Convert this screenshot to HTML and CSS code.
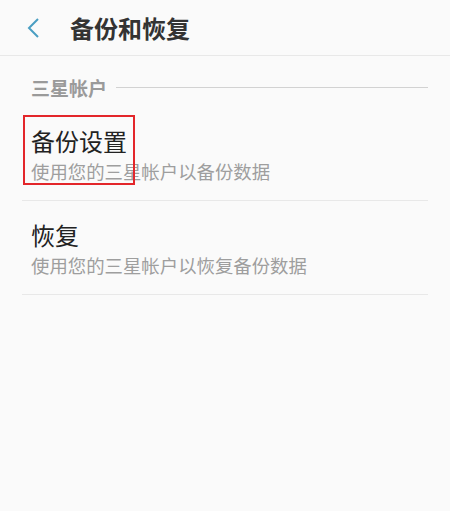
FILE: index.html
```html
<!DOCTYPE html>
<html lang="zh-CN">
<head>
<meta charset="utf-8">
<link rel="stylesheet" href="styles.css">
</head>
<body>
<header class="bar">
  <svg class="back" width="14" height="22" viewBox="0 0 14 22"><path d="M11 2 L2 11 L11 20" fill="none" stroke="#4a9ec2" stroke-width="2"/></svg>
  <h1 class="title">备份和恢复</h1>
</header>
<section class="section">
  <div class="section-head"><span class="section-label">三星帐户</span><span class="rule"></span></div>
  <ul class="list">
    <li class="item">
      <div class="item-title">备份设置</div>
      <div class="item-sub">使用您的三星帐户以备份数据</div>
      <div class="highlight"></div>
    </li>
    <li class="item">
      <div class="item-title">恢复</div>
      <div class="item-sub">使用您的三星帐户以恢复备份数据</div>
    </li>
  </ul>
</section>
</body>
</html>
```
FILE: styles.css
```css
html, body {
  margin: 0;
  padding: 0;
  background: #fafafa;
  font-family: "Noto Sans CJK SC", "Noto Sans", sans-serif;
}
.bar {
  height: 55px;
  border-bottom: 1px solid #e8e8e8;
  display: flex;
  align-items: center;
  padding-left: 27px;
  box-sizing: content-box;
}
.back {
  display: block;
  margin-top: 1px;
}
.title {
  margin: 0 0 0 29px;
  font-size: 24px;
  font-weight: bold;
  color: #333;
  line-height: 30px;
}
.section-head {
  display: flex;
  align-items: center;
  padding: 20px 22px 7px 31px;
}
.section-label {
  font-size: 19px;
  line-height: 24px;
  font-weight: bold;
  color: #9a9a9a;
}
.rule {
  flex: 1;
  height: 1px;
  background: #d2d2d2;
  margin-left: 9px;
  margin-top: -2px;
}
.list {
  list-style: none;
  margin: 0 22px;
  padding: 0;
}
.item {
  position: relative;
  padding: 19px 0 14px 9px;
  border-bottom: 1px solid #e8e8e8;
}
.item-title {
  font-size: 24px;
  line-height: 30px;
  color: #222;
}
.item-sub {
  font-size: 18.4px;
  line-height: 30px;
  color: #9e9e9e;
}
.highlight {
  position: absolute;
  left: 1px;
  top: 8px;
  width: 108px;
  height: 66px;
  border: 2px solid #e3262a;
}
```
